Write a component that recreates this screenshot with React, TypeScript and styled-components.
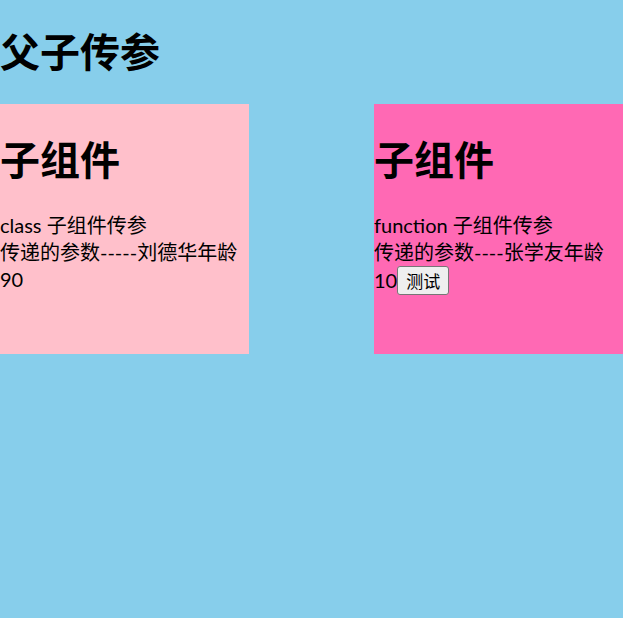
import React from "react";
import styled, { createGlobalStyle } from "styled-components";

const GlobalStyle = createGlobalStyle`
  html, body {
    margin: 0;
    padding: 0;
    background: #87ceeb;
    min-height: 100%;
  }
  body {
    font-family: Lato, "Noto Sans CJK SC", sans-serif;
    font-size: 20px;
    color: #000;
  }
`;

const Page = styled.div`
  display: flex;
  flex-direction: column;
`;

const Title = styled.h1`
  margin: 26px 0;
  font-size: 40px;
  line-height: 52px;
  font-weight: 700;
`;

const Row = styled.div`
  display: flex;
  justify-content: space-between;
`;

const Card = styled.div<{ $bg: string }>`
  width: 249px;
  height: 250px;
  background: ${(p) => p.$bg};
  display: flex;
  flex-direction: column;
`;

const CardTitle = styled.h1`
  margin: 30px 0 26px;
  font-size: 40px;
  line-height: 52px;
  font-weight: 700;
`;

const Line = styled.div`
  line-height: 27px;
  white-space: nowrap;
`;

const TestButton = styled.button`
  font-family: "Noto Sans CJK SC", sans-serif;
  font-size: 17px;
  line-height: 23px;
  height: 29px;
  padding: 1px 8px;
  border: 1px solid #767676;
  border-radius: 3px;
  background: #efefef;
  color: #000;
  vertical-align: baseline;
`;

type ChildProps = { kind: string; name: string; age: number; dashes: string; bg: string; withButton?: boolean };

function Child({ kind, name, age, dashes, bg, withButton }: ChildProps) {
  return (
    <Card $bg={bg}>
      <CardTitle>子组件</CardTitle>
      <Line>{kind} 子组件传参</Line>
      <Line>
        传递的参数{dashes}
        {name}年龄
      </Line>
      <Line>
        {age}
        {withButton && <TestButton>测试</TestButton>}
      </Line>
    </Card>
  );
}

export default function App() {
  return (
    <Page>
      <GlobalStyle />
      <Title>父子传参</Title>
      <Row>
        <Child kind="class" name="刘德华" age={90} dashes="-----" bg="#ffc0cb" />
        <Child kind="function" name="张学友" age={10} dashes="----" bg="#ff69b4" withButton />
      </Row>
    </Page>
  );
}
